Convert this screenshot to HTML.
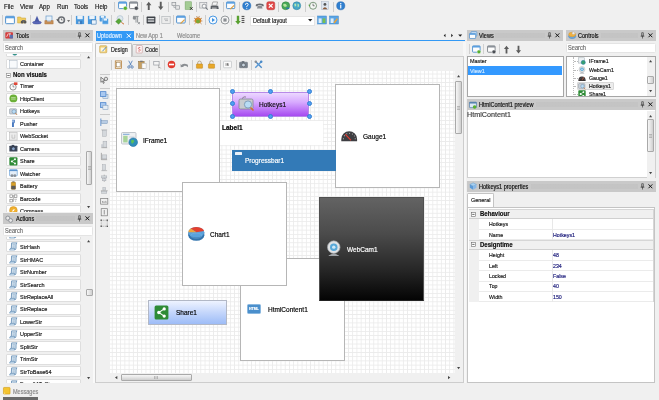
<!DOCTYPE html><html><head><meta charset="utf-8"><title>IDE</title><style>
*{margin:0;padding:0;box-sizing:border-box}
html,body{width:659px;height:400px;overflow:hidden;background:#f0f0f0;font-family:"Liberation Sans","DejaVu Sans",sans-serif;font-size:6px;color:#1a1a1a}
div,span,svg{position:absolute}
svg{overflow:visible}
.t{-webkit-text-stroke:0.18px currentColor;white-space:nowrap;line-height:8px;height:8px;transform:scaleX(.88);transform-origin:0 50%}
.sep{width:1px;height:10px;background:#cdcdcd}
.hdr{background:#c9c9c9;height:10.5px}
.dots{top:3px;height:5px;background-image:radial-gradient(circle,#b4b4b4 0.45px,transparent 0.6px);background-size:1.6px 1.6px}
.item{background:#fff;border:1px solid #dedede;border-radius:1px;height:10.8px;width:75.5px}
.white{background:#fff;border:1px solid #c4c4c4}
.sb{background:#f0f0f0}
.thumb{background:linear-gradient(to right,#f6f6f6,#e4e4e4 50%,#cfcfcf);border:1px solid #a9a9a9;border-radius:1px}
.thumbh{background:linear-gradient(to bottom,#f6f6f6,#e4e4e4 50%,#cfcfcf);border:1px solid #a9a9a9;border-radius:1px}
.panel{background:#fff;border:1px solid #b6b6b6}
.hnd{width:5px;height:5px;border-radius:50%;background:#4f9ff2;border:1px solid #3580d4}
</style></head><body><div id="app" style="left:0;top:0;width:659px;height:400px;will-change:transform">
<span class="t" style="left:4px;top:2.7px;font-size:6.9px;color:#1a1a1a">File</span>
<span class="t" style="left:19.5px;top:2.7px;font-size:6.9px;color:#1a1a1a">View</span>
<span class="t" style="left:39px;top:2.7px;font-size:6.9px;color:#1a1a1a">App</span>
<span class="t" style="left:56.5px;top:2.7px;font-size:6.9px;color:#1a1a1a">Run</span>
<span class="t" style="left:74px;top:2.7px;font-size:6.9px;color:#1a1a1a">Tools</span>
<span class="t" style="left:94.5px;top:2.7px;font-size:6.9px;color:#1a1a1a">Help</span>
<div class="sep" style="left:114px;top:1.5px"></div>
<div class="sep" style="left:141px;top:1.5px"></div>
<div class="sep" style="left:167.5px;top:1.5px"></div>
<div class="sep" style="left:195.5px;top:1.5px"></div>
<div class="sep" style="left:222.5px;top:1.5px"></div>
<div class="sep" style="left:239px;top:1.5px"></div>
<div class="sep" style="left:278px;top:1.5px"></div>
<div class="sep" style="left:305px;top:1.5px"></div>
<div class="sep" style="left:332.5px;top:1.5px"></div>
<svg style="left:117.5px;top:1.45px;" width="9.5" height="9.5" viewBox="0 0 10 10"><rect x="0.6" y="1" width="8.4" height="7" rx=".8" fill="#fdfdfd" stroke="#3f86c8" stroke-width=".9"/><rect x="0.6" y="1" width="8.4" height="1.8" fill="#5a9fe0"/><circle cx="7.7" cy="7.6" r="2.1" fill="#58b030" stroke="#fff" stroke-width=".4"/></svg>
<svg style="left:129px;top:1.45px;" width="9.5" height="9.5" viewBox="0 0 10 10"><rect x="0.6" y="1" width="8.4" height="7" rx=".8" fill="#fdfdfd" stroke="#70757c" stroke-width=".9"/><rect x="0.6" y="1" width="8.4" height="1.8" fill="#8a9098"/><circle cx="7.7" cy="7.6" r="2.1" fill="#4a4e54" stroke="#fff" stroke-width=".4"/></svg>
<svg style="left:144px;top:1.45px;" width="9.5" height="9.5" viewBox="0 0 10 10"><path d="M5 0.8 L7.8 4.4 H6 V9.4 H4 V4.4 H2.2 Z" fill="#5c5c5c"/></svg>
<svg style="left:155.5px;top:1.45px;" width="9.5" height="9.5" viewBox="0 0 10 10"><path d="M5 9.4 L7.8 5.8 H6 V0.8 H4 V5.8 H2.2 Z" fill="#5c5c5c"/></svg>
<svg style="left:171px;top:1.45px;" width="9.5" height="9.5" viewBox="0 0 10 10"><rect x="1" y="1.5" width="4" height="3.4" fill="#e8e8e8" stroke="#8a8f94" stroke-width=".7"/><rect x="5" y="5" width="4" height="3.6" fill="#e8e8e8" stroke="#8a8f94" stroke-width=".7"/><path d="M3 5 V6.8 H5" stroke="#8a8f94" stroke-width=".6" fill="none"/></svg>
<svg style="left:183.5px;top:1.45px;" width="9.5" height="9.5" viewBox="0 0 10 10"><rect x="1.2" y="0.8" width="6.6" height="8" fill="#a4cc94" stroke="#7aa86a" stroke-width=".6"/><path d="M6.4 6.6 L9 9.2 M9 6.6 L6.4 9.2" stroke="#222" stroke-width="1"/></svg>
<svg style="left:198.5px;top:1.45px;" width="9.5" height="9.5" viewBox="0 0 10 10"><rect x="0.8" y="1.4" width="7.4" height="6" fill="#ececec" stroke="#9a9ea4" stroke-width=".7"/><circle cx="5.4" cy="5.4" r="2.1" fill="#f8f8f8" stroke="#80858c" stroke-width=".8"/><path d="M7 7 L9.2 9.2" stroke="#70757c" stroke-width="1.1"/></svg>
<svg style="left:210px;top:1.45px;" width="9.5" height="9.5" viewBox="0 0 10 10"><path d="M3 1 H8 L7 4.6 H2 Z" fill="#f4f4f4" stroke="#777" stroke-width=".6"/><path d="M0.8 5 H8.6 L9.2 8.4 H0.6 Z" fill="#5a5e64"/><rect x="2" y="7" width="5" height="1" fill="#ddd"/></svg>
<svg style="left:225.5px;top:1.45px;" width="9.5" height="9.5" viewBox="0 0 10 10"><rect x="0.6" y="1" width="8.6" height="7" rx=".8" fill="#fdfdfd" stroke="#3f86c8" stroke-width=".9"/><rect x="0.6" y="1" width="8.6" height="1.8" fill="#5a9fe0"/><path d="M4.5 8.6 L8.6 4.6" stroke="#e0a040" stroke-width="1.3"/></svg>
<svg style="left:241.5px;top:1.45px;" width="9.5" height="9.5" viewBox="0 0 10 10"><circle cx="5" cy="5" r="4.3" fill="#2f7fd0" stroke="#1f5fa8" stroke-width=".5"/><path d="M3.6 4 Q3.6 2.4 5 2.4 Q6.5 2.4 6.5 3.8 Q6.5 4.7 5 5.4 V6.2" stroke="#fff" stroke-width="1" fill="none"/><circle cx="5" cy="7.6" r=".6" fill="#fff"/></svg>
<svg style="left:254.5px;top:1.45px;" width="9.5" height="9.5" viewBox="0 0 10 10"><path d="M0.8 4.6 Q0.8 2.6 5 2.6 Q9.2 2.6 9.2 4.6 V5.4 H7 V4.6 H3 V5.4 H0.8 Z" fill="#6a6e74"/><path d="M2 7.8 L3 5 H7 L8 7.8 Z" fill="#8a8e94"/></svg>
<svg style="left:266px;top:1.45px;" width="9.5" height="9.5" viewBox="0 0 10 10"><rect x="0.8" y="0.8" width="8.4" height="8.4" rx="1.8" fill="#e04848" stroke="#b82828" stroke-width=".5"/><path d="M3 3 L7 7 M7 3 L3 7" stroke="#fff" stroke-width="1.3"/></svg>
<svg style="left:280.5px;top:1.45px;" width="9.5" height="9.5" viewBox="0 0 10 10"><circle cx="5" cy="5" r="4.2" fill="#48a858" stroke="#2e7a3c" stroke-width=".5"/><path d="M2 4 Q4 2 5.5 3.6 Q7 5 5.5 6 Q4 6.5 3 5.5 Z" fill="#b8e4a0"/><path d="M5.5 7.6 H8.6" stroke="#2870c0" stroke-width="1.3"/></svg>
<svg style="left:292px;top:1.45px;" width="9.5" height="9.5" viewBox="0 0 10 10"><circle cx="5" cy="5" r="4.2" fill="#48a8c8" stroke="#2a7a9a" stroke-width=".5"/><path d="M2.4 3.4 Q3.6 2 4.4 3.6 T3 6 Z M5.8 3 Q7.4 2.6 7.4 4.6 T6 6.6 Z" fill="#b8e8b0"/></svg>
<svg style="left:307.5px;top:1.45px;" width="9.5" height="9.5" viewBox="0 0 10 10"><circle cx="5.3" cy="5" r="3.7" fill="#f4f6f4" stroke="#6a8a6a" stroke-width=".9"/><path d="M5.3 2.8 V5 H7" stroke="#444" stroke-width=".7" fill="none"/><path d="M0.4 4 L2.6 4 L1.5 6 Z" fill="#58a040"/></svg>
<svg style="left:320px;top:1.45px;" width="9.5" height="9.5" viewBox="0 0 10 10"><rect x="1.5" y="0.8" width="7.4" height="8.4" fill="#dfe6f0" stroke="#a8b4c4" stroke-width=".5"/><circle cx="5.2" cy="3.6" r="1.5" fill="#555"/><path d="M2.6 8.8 Q5.2 4.4 7.8 8.8 Z" fill="#8a5a3a"/></svg>
<svg style="left:336px;top:1.45px;" width="9.5" height="9.5" viewBox="0 0 10 10"><circle cx="5" cy="5" r="4.3" fill="#2f7fd0" stroke="#1f5fa8" stroke-width=".5"/><rect x="4.4" y="4.2" width="1.2" height="3.6" fill="#fff"/><circle cx="5" cy="2.8" r=".8" fill="#fff"/></svg>
<div class="sep" style="left:2px;top:15px"></div>
<div class="sep" style="left:29.5px;top:15px"></div>
<div class="sep" style="left:71px;top:15px"></div>
<div class="sep" style="left:111px;top:15px"></div>
<div class="sep" style="left:127.5px;top:15px"></div>
<div class="sep" style="left:143px;top:15px"></div>
<div class="sep" style="left:159px;top:15px"></div>
<div class="sep" style="left:172.5px;top:15px"></div>
<div class="sep" style="left:189px;top:15px"></div>
<div class="sep" style="left:205px;top:15px"></div>
<div class="sep" style="left:231px;top:15px"></div>
<svg style="left:5px;top:14.8px;" width="10" height="10" viewBox="0 0 10 10"><rect x="0.6" y="1.3" width="8.8" height="7.4" rx=".8" fill="#fdfdfd" stroke="#3f86c8" stroke-width=".9"/><rect x="0.6" y="1.3" width="8.8" height="2" fill="#5a9fe0"/></svg>
<svg style="left:17px;top:14.8px;" width="10" height="10" viewBox="0 0 10 10"><path d="M0.6 2 H3.6 L4.4 3 H8.6 V8 H0.6 Z" fill="#f0cc60" stroke="#c8a030" stroke-width=".5"/><circle cx="5.2" cy="7" r="1.5" fill="#555"/><circle cx="8" cy="7" r="1.5" fill="#555"/><rect x="5" y="5" width="3.2" height="1.6" fill="#666"/></svg>
<svg style="left:32px;top:14.8px;" width="10" height="10" viewBox="0 0 10 10"><path d="M5 0.8 L7.6 7 H2.4 Z" fill="#4a5aa8"/><ellipse cx="5" cy="7.6" rx="4.4" ry="1.5" fill="#5a68b8" stroke="#3a4890" stroke-width=".4"/></svg>
<svg style="left:44px;top:14.8px;" width="10" height="10" viewBox="0 0 10 10"><rect x="2" y="1" width="6" height="5" fill="#e8f2fa" stroke="#6a9ac8" stroke-width=".7"/><path d="M0.8 5.6 H3 V6.8 H7 V5.6 H9.2 V9 H0.8 Z" fill="#c89058" stroke="#a87038" stroke-width=".4"/></svg>
<svg style="left:56px;top:14.8px;" width="10" height="10" viewBox="0 0 10 10"><circle cx="5.4" cy="5" r="3.8" fill="#6a6e74"/><circle cx="5.4" cy="5" r="2.2" fill="#f4f4f4"/><path d="M5.4 3.4 V5 H6.6" stroke="#333" stroke-width=".6" fill="none"/><path d="M0.2 4.2 H2.8 L1.5 6.2 Z" fill="#555"/></svg>
<svg style="left:75px;top:14.8px;" width="10" height="10" viewBox="0 0 10 10"><path d="M0.9 0.9 H9.1 V9.1 H0.9 Z" fill="#4a9ade"/><rect x="2.3" y="0.9" width="5.4" height="3.3" fill="#eaf3fb"/><rect x="2.8" y="5.8" width="4.4" height="3.3" fill="#3a7cc0"/><rect x="3.4" y="6.4" width="1.3" height="2.2" fill="#eaf3fb"/></svg>
<svg style="left:86.5px;top:14.8px;" width="10" height="10" viewBox="0 0 10 10"><path d="M0.9 0.9 H9.1 V9.1 H0.9 Z" fill="#4a9ade"/><rect x="2.3" y="0.9" width="5.4" height="3.3" fill="#eaf3fb"/><rect x="4.6" y="5" width="4.5" height="4.1" fill="#eaf3fb" stroke="#2a6aa8" stroke-width=".5"/></svg>
<svg style="left:99px;top:14.8px;" width="10" height="10" viewBox="0 0 10 10"><rect x="0.6" y="0.8" width="6" height="5.6" rx=".6" fill="#4a9ade"/><rect x="1.8" y="0.8" width="3.4" height="2" fill="#eaf3fb"/><rect x="3.2" y="3.4" width="6.2" height="5.8" rx=".6" fill="#4a9be0" stroke="#eaf3fb" stroke-width=".5"/><rect x="4.6" y="3.6" width="3.4" height="2" fill="#eaf3fb"/></svg>
<svg style="left:115px;top:14.8px;" width="10" height="10" viewBox="0 0 10 10"><circle cx="5" cy="3.6" r="3" fill="#dfe8ee" stroke="#9ab0c0" stroke-width=".5"/><path d="M0.6 6.6 L4 3.6 L6.6 6 L3.6 9.2 Z" fill="#58a838" stroke="#3a7a24" stroke-width=".4"/><path d="M6.4 7.4 L9 9.2" stroke="#c87030" stroke-width="1"/></svg>
<svg style="left:130.5px;top:14.8px;" width="10" height="10" viewBox="0 0 10 10"><path d="M2 1.4 H7.6 M5 1.4 V7.6 M6.6 1.4 V7.6" stroke="#8a8e92" stroke-width=".9" fill="none"/><circle cx="3.4" cy="3" r="1.7" fill="#8a8e92"/><path d="M6.8 7 L9 9.2 M9 7 L6.8 9.2" stroke="#8a8e92" stroke-width=".8"/></svg>
<svg style="left:146px;top:14.8px;" width="10" height="10" viewBox="0 0 10 10"><rect x="0.6" y="1.6" width="8.8" height="6.8" rx=".6" fill="#3c4046"/><rect x="1.8" y="3" width="6.4" height="1.4" fill="#d8dadc"/><rect x="1.8" y="5.4" width="6.4" height="1.4" fill="#d8dadc"/></svg>
<svg style="left:161px;top:14.8px;" width="10" height="10" viewBox="0 0 10 10"><rect x="0.8" y="1.4" width="8.4" height="7.2" fill="#ececec" stroke="#b4b8bc" stroke-width=".7"/><path d="M3 4 H7 M4 5.6 H7" stroke="#a0a4a8" stroke-width=".7"/></svg>
<svg style="left:176px;top:14.8px;" width="10" height="10" viewBox="0 0 10 10"><rect x="0.6" y="1" width="8.6" height="7" rx=".8" fill="#fdfdfd" stroke="#3f86c8" stroke-width=".9"/><rect x="0.6" y="1" width="8.6" height="1.8" fill="#5a9fe0"/><path d="M4.5 8.6 L8.6 4.6" stroke="#e0a040" stroke-width="1.3"/></svg>
<svg style="left:193px;top:14.8px;" width="10" height="10" viewBox="0 0 10 10"><ellipse cx="5" cy="5.6" rx="3.2" ry="3" fill="#d88a28"/><ellipse cx="5" cy="6.4" rx="2" ry="1.8" fill="#78a838"/><path d="M1 3 L3 4.4 M9 3 L7 4.4 M0.6 6 H2 M8 6 H9.4 M1.4 9 L2.8 7.8 M8.6 9 L7.2 7.8 M3.6 1 L4.4 2.8 M6.4 1 L5.6 2.8" stroke="#a85a18" stroke-width=".6"/></svg>
<svg style="left:208px;top:14.8px;" width="10" height="10" viewBox="0 0 10 10"><circle cx="5" cy="5" r="4" fill="#f4f9fe" stroke="#3a8fe0" stroke-width=".9"/><path d="M4 3 L7 5 L4 7 Z" fill="#3a8fe0"/></svg>
<svg style="left:220px;top:14.8px;" width="10" height="10" viewBox="0 0 10 10"><circle cx="5" cy="5" r="4" fill="#f6f6f6" stroke="#8a8e92" stroke-width=".9"/><rect x="3.4" y="3.4" width="3.2" height="3.2" fill="#8a8e92"/></svg>
<svg style="left:235px;top:14.8px;" width="10" height="10" viewBox="0 0 10 10"><path d="M3 9.4 L5.8 6 H4.2 V0.8 H1.8 V6 H0.2 Z" fill="#58a030"/><path d="M6.6 1.4 H9.4 M6.6 3.4 H9.4 M6.6 5.4 H9.4 M6.6 7.4 H9.4" stroke="#444" stroke-width="1"/></svg>
<svg style="left:317px;top:14.8px;" width="10" height="10" viewBox="0 0 10 10"><rect x="0.6" y="1" width="8.8" height="8" fill="#5aa4e4" stroke="#3a84c8" stroke-width=".5"/><rect x="1.6" y="3.4" width="3" height="4.6" fill="#dcecf8"/><rect x="5.6" y="3.4" width="2.8" height="4.6" fill="#78c050"/></svg>
<svg style="left:329px;top:14.8px;" width="10" height="10" viewBox="0 0 10 10"><rect x="0.6" y="1" width="8.8" height="8" fill="#5aa4e4" stroke="#3a84c8" stroke-width=".5"/><rect x="1.6" y="3.4" width="3" height="4.6" fill="#dcecf8"/><path d="M5 8 L8.4 3.6" stroke="#f0a030" stroke-width="1.4"/></svg>
<svg style="left:66.9px;top:19.85px" width="3.2" height="2.3" viewBox="0 0 4 3"><path d="M0 0 L2 3 L4 0 Z" fill="#777"/></svg>
<div class="" style="left:250px;top:15.5px;width:65px;height:10px;background:#fff;border:1px solid #e4e4e4"></div>
<span class="t" style="left:253px;top:16.5px;font-size:6.3px;color:#222">Default layout</span>
<svg style="left:308px;top:19.3px" width="4.4" height="2.6" viewBox="0 0 5 3"><path d="M0 0 H5 L2.5 3 Z" fill="#222"/></svg>
<div class="hdr" style="left:3px;top:30.1px;width:90px;height:10.5px;"></div>
<svg style="left:5.3px;top:31.25px;" width="8.3" height="8.3" viewBox="0 0 10 10"><rect x="0.4" y="1.4" width="9.2" height="7.6" rx="1" fill="#d43c3c"/><path d="M2 7 L4 3 M4.6 3.4 H7 M5.8 3.4 V7" stroke="#fff" stroke-width=".9"/><rect x="5.6" y="4.6" width="4" height="4.4" fill="#3a78c8" opacity=".8"/></svg>
<span class="t" style="left:16px;top:31.6px;font-size:6.3px;color:#111">Tools</span>
<div class="dots" style="left:30.5px;top:33.1px;width:45.0px"></div>
<svg style="left:77.3px;top:32.1px" width="5" height="7" viewBox="1 0 5 7"><path d="M2.5 0.5 H4.5 V3.7 H5.3 V4.4 H3.8 V6.6 H3.2 V4.4 H1.7 V3.7 H2.5 Z" fill="#2a2a2a"/><rect x="3" y="1" width=".8" height="2.6" fill="#bbb"/></svg>
<svg style="left:85px;top:32.9px" width="4.8" height="4.6" viewBox="0 0 5 5"><path d="M0.4 0.4 L4.6 4.6 M4.6 0.4 L0.4 4.6" stroke="#111" stroke-width="1.05" fill="none"/></svg>
<div class="" style="left:3px;top:42.4px;width:90.2px;height:10.6px;background:#fff;border:1px solid #e4e4e4;border-radius:1.5px"></div>
<span class="t" style="left:4.5px;top:43.699999999999996px;color:#6e6e6e;font-size:6.4px">Search</span>
<div style="left:3px;top:54.1px;width:82px;height:158.4px;overflow:hidden">
<div class="item" style="left:2.6px;top:-8.000000000000002px"></div>
<svg style="left:5.800000000000001px;top:-7.000000000000002px;" width="8.8" height="8.8" viewBox="0 0 10 10"><rect x="0.6" y="1" width="7.6" height="6.6" fill="#eef2f4" stroke="#9aa4ac" stroke-width=".6"/><circle cx="6.6" cy="6.8" r="2.6" fill="#38a070" stroke="#2a78b0" stroke-width=".6"/></svg>
<span class="t" style="left:16.8px;top:-6.400000000000001px;font-size:6.25px">IFrame</span>
<div class="item" style="left:2.6px;top:4.499999999999998px"></div>
<svg style="left:5.800000000000001px;top:5.499999999999998px;" width="8.8" height="8.8" viewBox="0 0 10 10"><rect x="0.8" y="0.8" width="8.4" height="8.4" fill="#f8fafc" stroke="#a8b4c0" stroke-width=".6"/></svg>
<span class="t" style="left:16.8px;top:6.099999999999999px;font-size:6.25px">Container</span>
<svg style="left:3.2px;top:18.8px" width="5" height="5" viewBox="0 0 5 5"><rect x="0.5" y="0.5" width="4" height="4" fill="#fff" stroke="#888" stroke-width=".6"/><path d="M1.3 2.5 H3.7" stroke="#333" stroke-width=".7"/></svg>
<span class="t" style="left:10px;top:17.1px;font-weight:bold;font-size:6.3px;color:#111;transform:scaleX(.96)">Non visuals</span>
<div class="item" style="left:2.6px;top:26.799999999999997px"></div>
<svg style="left:5.800000000000001px;top:27.799999999999997px;" width="8.8" height="8.8" viewBox="0 0 10 10"><circle cx="4.6" cy="5.6" r="3.6" fill="#fafafa" stroke="#666" stroke-width=".8"/><path d="M4.6 3.6 V5.6 H6.2" stroke="#444" stroke-width=".6" fill="none"/><rect x="5.6" y="0.4" width="4" height="3" fill="#e04838"/></svg>
<span class="t" style="left:16.8px;top:28.399999999999995px;font-size:6.25px">Timer</span>
<div class="item" style="left:2.6px;top:39.25px"></div>
<svg style="left:5.800000000000001px;top:40.25px;" width="8.8" height="8.8" viewBox="0 0 10 10"><circle cx="5" cy="5" r="4.5" fill="#6cb038"/><path d="M2.4 4.2 H7.6 M2.4 5.8 H7.6" stroke="#e8f8d8" stroke-width=".7"/></svg>
<span class="t" style="left:16.8px;top:40.85px;font-size:6.25px">HttpClient</span>
<div class="item" style="left:2.6px;top:51.69999999999999px"></div>
<svg style="left:5.800000000000001px;top:52.69999999999999px;" width="8.8" height="8.8" viewBox="0 0 10 10"><rect x="0.6" y="2" width="8" height="6" rx=".8" fill="#c8d0d8" stroke="#8a949e" stroke-width=".6"/><circle cx="5.6" cy="5.2" r="2.2" fill="#b8dcf4" stroke="#6a8aac" stroke-width=".6"/><path d="M7.2 7 L9.2 9" stroke="#c87838" stroke-width="1"/></svg>
<span class="t" style="left:16.8px;top:53.29999999999999px;font-size:6.25px">Hotkeys</span>
<div class="item" style="left:2.6px;top:64.14999999999998px"></div>
<svg style="left:5.800000000000001px;top:65.14999999999998px;" width="8.8" height="8.8" viewBox="0 0 10 10"><path d="M3.4 0.8 H6.6 V4 L5.6 5 V9.2 H3.4 Z" fill="#4a7ac0"/><rect x="3.8" y="1.4" width="1.4" height="2.4" fill="#c8dcf4"/></svg>
<span class="t" style="left:16.8px;top:65.74999999999999px;font-size:6.25px">Pusher</span>
<div class="item" style="left:2.6px;top:76.6px"></div>
<svg style="left:5.800000000000001px;top:77.6px;" width="8.8" height="8.8" viewBox="0 0 10 10"><rect x="0.8" y="0.8" width="8.4" height="8.4" fill="#ececec" stroke="#b0b0b0" stroke-width=".6"/><path d="M3.4 3 V7 H6.6 V3" stroke="#b0b0b0" stroke-width=".7" fill="none"/></svg>
<span class="t" style="left:16.8px;top:78.2px;font-size:6.25px">WebSocket</span>
<div class="item" style="left:2.6px;top:89.05000000000001px"></div>
<svg style="left:5.800000000000001px;top:90.05000000000001px;" width="8.8" height="8.8" viewBox="0 0 10 10"><rect x="0.4" y="2" width="9.2" height="6.6" rx=".6" fill="#3c4658"/><rect x="3" y="1" width="3" height="1.4" fill="#3c4658"/><circle cx="5" cy="5.4" r="2.1" fill="#8aa4c8" stroke="#1c2638" stroke-width=".6"/></svg>
<span class="t" style="left:16.8px;top:90.65000000000002px;font-size:6.25px">Camera</span>
<div class="item" style="left:2.6px;top:101.5px"></div>
<svg style="left:5.800000000000001px;top:102.5px;" width="8.8" height="8.8" viewBox="0 0 10 10"><rect x="0.4" y="0.4" width="9.2" height="9.2" rx="1" fill="#2e8b36"/><path d="M6.8 2.6 L3.2 5 L6.8 7.4" stroke="#fff" stroke-width=".7" fill="none"/><circle cx="6.8" cy="2.6" r="1.1" fill="#fff"/><circle cx="3.2" cy="5" r="1.1" fill="#fff"/><circle cx="6.8" cy="7.4" r="1.1" fill="#fff"/></svg>
<span class="t" style="left:16.8px;top:103.10000000000001px;font-size:6.25px">Share</span>
<div class="item" style="left:2.6px;top:113.94999999999999px"></div>
<svg style="left:5.800000000000001px;top:114.94999999999999px;" width="8.8" height="8.8" viewBox="0 0 10 10"><rect x="0.6" y="0.8" width="8.8" height="7" rx=".6" fill="#e4eef8" stroke="#5a94d0" stroke-width=".7"/><rect x="0.6" y="0.8" width="8.8" height="1.6" fill="#5a94d0"/><circle cx="3.4" cy="7.6" r="1.6" fill="#8a9098"/><circle cx="6.6" cy="7.6" r="1.6" fill="#8a9098"/></svg>
<span class="t" style="left:16.8px;top:115.55px;font-size:6.25px">Watcher</span>
<div class="item" style="left:2.6px;top:126.39999999999998px"></div>
<svg style="left:5.800000000000001px;top:127.39999999999998px;" width="8.8" height="8.8" viewBox="0 0 10 10"><rect x="2.6" y="1.2" width="4.8" height="8.2" rx=".8" fill="#d8a028" stroke="#9a6a10" stroke-width=".5"/><rect x="3.8" y="0.4" width="2.4" height="1.2" fill="#777"/><rect x="2.6" y="5.4" width="4.8" height="4" fill="#5a5a5a"/></svg>
<span class="t" style="left:16.8px;top:127.99999999999999px;font-size:6.25px">Battery</span>
<div class="item" style="left:2.6px;top:138.85px"></div>
<svg style="left:5.800000000000001px;top:139.85px;" width="8.8" height="8.8" viewBox="0 0 10 10"><rect x="1" y="1" width="3" height="3" fill="none" stroke="#888" stroke-width=".8"/><rect x="6" y="1" width="3" height="3" fill="none" stroke="#888" stroke-width=".8"/><rect x="1" y="6" width="3" height="3" fill="none" stroke="#888" stroke-width=".8"/><path d="M5 1 V9 M6 6 H9 M7.6 7.4 V9" stroke="#999" stroke-width=".8"/></svg>
<span class="t" style="left:16.8px;top:140.45px;font-size:6.25px">Barcode</span>
<div class="item" style="left:2.6px;top:151.3px"></div>
<svg style="left:5.800000000000001px;top:152.3px;" width="8.8" height="8.8" viewBox="0 0 10 10"><circle cx="5" cy="5" r="4.4" fill="#f0b030" stroke="#c88818" stroke-width=".5"/><path d="M3.4 6.6 L4.4 4.4 L6.6 3.4 L5.6 5.6 Z" fill="#fff"/></svg>
<span class="t" style="left:16.8px;top:152.9px;font-size:6.25px">Compass</span>
</div>
<div class="sb" style="left:85px;top:54px;width:8px;height:158px;"></div>
<svg style="left:87.4px;top:56.35px" width="3.2" height="2.3" viewBox="0 0 4 3"><path d="M0 3 L2 0 L4 3 Z" fill="#444"/></svg>
<svg style="left:87.4px;top:206.35px" width="3.2" height="2.3" viewBox="0 0 4 3"><path d="M0 0 L2 3 L4 0 Z" fill="#444"/></svg>
<div class="thumb" style="left:85.8px;top:151.3px;width:6.7px;height:33.7px;"></div>
<svg style="left:87.7px;top:166px" width="3" height="4" viewBox="0 0 3 4"><path d="M0 .5 H3 M0 2 H3 M0 3.5 H3" stroke="#888" stroke-width=".5"/></svg>
<div class="hdr" style="left:3px;top:213.4px;width:90px;height:10.5px;"></div>
<svg style="left:5.3px;top:214.55px;" width="8.3" height="8.3" viewBox="0 0 10 10"><circle cx="3.4" cy="3.8" r="2.5" fill="#e8e8e8" stroke="#80858c" stroke-width="1"/><circle cx="6.8" cy="6.6" r="2.3" fill="#e8e8e8" stroke="#80858c" stroke-width="1"/></svg>
<span class="t" style="left:16.1px;top:214.9px;font-size:6.3px;color:#111">Actions</span>
<div class="dots" style="left:35.7px;top:216.4px;width:39.8px"></div>
<svg style="left:77.3px;top:215.4px" width="5" height="7" viewBox="1 0 5 7"><path d="M2.5 0.5 H4.5 V3.7 H5.3 V4.4 H3.8 V6.6 H3.2 V4.4 H1.7 V3.7 H2.5 Z" fill="#2a2a2a"/><rect x="3" y="1" width=".8" height="2.6" fill="#bbb"/></svg>
<svg style="left:85.1px;top:216.20000000000002px" width="4.8" height="4.6" viewBox="0 0 5 5"><path d="M0.4 0.4 L4.6 4.6 M4.6 0.4 L0.4 4.6" stroke="#111" stroke-width="1.05" fill="none"/></svg>
<div class="" style="left:3px;top:225.9px;width:90.2px;height:10.6px;background:#fff;border:1px solid #e4e4e4;border-radius:1.5px"></div>
<span class="t" style="left:4.5px;top:227.20000000000002px;color:#6e6e6e;font-size:6.4px">Search</span>
<div style="left:3px;top:237.2px;width:82px;height:146.3px;overflow:hidden">
<div class="item" style="left:2.6px;top:-8.180000000000001px"></div>
<svg style="left:5.800000000000001px;top:-7.1800000000000015px;" width="8.8" height="8.8" viewBox="0 0 10 10"><path d="M3 1 H9.2 Q8 1.8 8 3.4 V7 Q8 9 6 9 H0.8 Q2.4 8.6 2.6 7 Z" fill="#dce8f2" stroke="#4a7aa8" stroke-width=".8"/><path d="M0.8 9 Q0.8 7.2 2.6 7.2 H6.4 Q6.6 8.6 5.8 9" fill="#b8d0e4" stroke="#4a7aa8" stroke-width=".6"/><path d="M4 3 H6.8 M4 4.6 H6.8 M4 6 H6.4" stroke="#6a94bc" stroke-width=".5"/></svg>
<span class="t" style="left:16.8px;top:-6.580000000000001px;font-size:6.25px">StrLen</span>
<div class="item" style="left:2.6px;top:4.299999999999988px"></div>
<svg style="left:5.800000000000001px;top:5.299999999999988px;" width="8.8" height="8.8" viewBox="0 0 10 10"><path d="M3 1 H9.2 Q8 1.8 8 3.4 V7 Q8 9 6 9 H0.8 Q2.4 8.6 2.6 7 Z" fill="#dce8f2" stroke="#4a7aa8" stroke-width=".8"/><path d="M0.8 9 Q0.8 7.2 2.6 7.2 H6.4 Q6.6 8.6 5.8 9" fill="#b8d0e4" stroke="#4a7aa8" stroke-width=".6"/><path d="M4 3 H6.8 M4 4.6 H6.8 M4 6 H6.4" stroke="#6a94bc" stroke-width=".5"/></svg>
<span class="t" style="left:16.8px;top:5.899999999999989px;font-size:6.25px">StrHash</span>
<div class="item" style="left:2.6px;top:16.78000000000001px"></div>
<svg style="left:5.800000000000001px;top:17.78000000000001px;" width="8.8" height="8.8" viewBox="0 0 10 10"><path d="M3 1 H9.2 Q8 1.8 8 3.4 V7 Q8 9 6 9 H0.8 Q2.4 8.6 2.6 7 Z" fill="#dce8f2" stroke="#4a7aa8" stroke-width=".8"/><path d="M0.8 9 Q0.8 7.2 2.6 7.2 H6.4 Q6.6 8.6 5.8 9" fill="#b8d0e4" stroke="#4a7aa8" stroke-width=".6"/><path d="M4 3 H6.8 M4 4.6 H6.8 M4 6 H6.4" stroke="#6a94bc" stroke-width=".5"/></svg>
<span class="t" style="left:16.8px;top:18.380000000000006px;font-size:6.25px">StrHMAC</span>
<div class="item" style="left:2.6px;top:29.260000000000026px"></div>
<svg style="left:5.800000000000001px;top:30.260000000000026px;" width="8.8" height="8.8" viewBox="0 0 10 10"><path d="M3 1 H9.2 Q8 1.8 8 3.4 V7 Q8 9 6 9 H0.8 Q2.4 8.6 2.6 7 Z" fill="#dce8f2" stroke="#4a7aa8" stroke-width=".8"/><path d="M0.8 9 Q0.8 7.2 2.6 7.2 H6.4 Q6.6 8.6 5.8 9" fill="#b8d0e4" stroke="#4a7aa8" stroke-width=".6"/><path d="M4 3 H6.8 M4 4.6 H6.8 M4 6 H6.4" stroke="#6a94bc" stroke-width=".5"/></svg>
<span class="t" style="left:16.8px;top:30.860000000000024px;font-size:6.25px">StrNumber</span>
<div class="item" style="left:2.6px;top:41.73999999999999px"></div>
<svg style="left:5.800000000000001px;top:42.73999999999999px;" width="8.8" height="8.8" viewBox="0 0 10 10"><path d="M3 1 H9.2 Q8 1.8 8 3.4 V7 Q8 9 6 9 H0.8 Q2.4 8.6 2.6 7 Z" fill="#dce8f2" stroke="#4a7aa8" stroke-width=".8"/><path d="M0.8 9 Q0.8 7.2 2.6 7.2 H6.4 Q6.6 8.6 5.8 9" fill="#b8d0e4" stroke="#4a7aa8" stroke-width=".6"/><path d="M4 3 H6.8 M4 4.6 H6.8 M4 6 H6.4" stroke="#6a94bc" stroke-width=".5"/></svg>
<span class="t" style="left:16.8px;top:43.33999999999999px;font-size:6.25px">StrSearch</span>
<div class="item" style="left:2.6px;top:54.220000000000006px"></div>
<svg style="left:5.800000000000001px;top:55.220000000000006px;" width="8.8" height="8.8" viewBox="0 0 10 10"><path d="M3 1 H9.2 Q8 1.8 8 3.4 V7 Q8 9 6 9 H0.8 Q2.4 8.6 2.6 7 Z" fill="#dce8f2" stroke="#4a7aa8" stroke-width=".8"/><path d="M0.8 9 Q0.8 7.2 2.6 7.2 H6.4 Q6.6 8.6 5.8 9" fill="#b8d0e4" stroke="#4a7aa8" stroke-width=".6"/><path d="M4 3 H6.8 M4 4.6 H6.8 M4 6 H6.4" stroke="#6a94bc" stroke-width=".5"/></svg>
<span class="t" style="left:16.8px;top:55.82000000000001px;font-size:6.25px">StrReplaceAll</span>
<div class="item" style="left:2.6px;top:66.69999999999996px"></div>
<svg style="left:5.800000000000001px;top:67.69999999999996px;" width="8.8" height="8.8" viewBox="0 0 10 10"><path d="M3 1 H9.2 Q8 1.8 8 3.4 V7 Q8 9 6 9 H0.8 Q2.4 8.6 2.6 7 Z" fill="#dce8f2" stroke="#4a7aa8" stroke-width=".8"/><path d="M0.8 9 Q0.8 7.2 2.6 7.2 H6.4 Q6.6 8.6 5.8 9" fill="#b8d0e4" stroke="#4a7aa8" stroke-width=".6"/><path d="M4 3 H6.8 M4 4.6 H6.8 M4 6 H6.4" stroke="#6a94bc" stroke-width=".5"/></svg>
<span class="t" style="left:16.8px;top:68.29999999999997px;font-size:6.25px">StrReplace</span>
<div class="item" style="left:2.6px;top:79.17999999999998px"></div>
<svg style="left:5.800000000000001px;top:80.17999999999998px;" width="8.8" height="8.8" viewBox="0 0 10 10"><path d="M3 1 H9.2 Q8 1.8 8 3.4 V7 Q8 9 6 9 H0.8 Q2.4 8.6 2.6 7 Z" fill="#dce8f2" stroke="#4a7aa8" stroke-width=".8"/><path d="M0.8 9 Q0.8 7.2 2.6 7.2 H6.4 Q6.6 8.6 5.8 9" fill="#b8d0e4" stroke="#4a7aa8" stroke-width=".6"/><path d="M4 3 H6.8 M4 4.6 H6.8 M4 6 H6.4" stroke="#6a94bc" stroke-width=".5"/></svg>
<span class="t" style="left:16.8px;top:80.77999999999999px;font-size:6.25px">LowerStr</span>
<div class="item" style="left:2.6px;top:91.66px"></div>
<svg style="left:5.800000000000001px;top:92.66px;" width="8.8" height="8.8" viewBox="0 0 10 10"><path d="M3 1 H9.2 Q8 1.8 8 3.4 V7 Q8 9 6 9 H0.8 Q2.4 8.6 2.6 7 Z" fill="#dce8f2" stroke="#4a7aa8" stroke-width=".8"/><path d="M0.8 9 Q0.8 7.2 2.6 7.2 H6.4 Q6.6 8.6 5.8 9" fill="#b8d0e4" stroke="#4a7aa8" stroke-width=".6"/><path d="M4 3 H6.8 M4 4.6 H6.8 M4 6 H6.4" stroke="#6a94bc" stroke-width=".5"/></svg>
<span class="t" style="left:16.8px;top:93.26px;font-size:6.25px">UpperStr</span>
<div class="item" style="left:2.6px;top:104.14000000000001px"></div>
<svg style="left:5.800000000000001px;top:105.14000000000001px;" width="8.8" height="8.8" viewBox="0 0 10 10"><path d="M3 1 H9.2 Q8 1.8 8 3.4 V7 Q8 9 6 9 H0.8 Q2.4 8.6 2.6 7 Z" fill="#dce8f2" stroke="#4a7aa8" stroke-width=".8"/><path d="M0.8 9 Q0.8 7.2 2.6 7.2 H6.4 Q6.6 8.6 5.8 9" fill="#b8d0e4" stroke="#4a7aa8" stroke-width=".6"/><path d="M4 3 H6.8 M4 4.6 H6.8 M4 6 H6.4" stroke="#6a94bc" stroke-width=".5"/></svg>
<span class="t" style="left:16.8px;top:105.74000000000002px;font-size:6.25px">SplitStr</span>
<div class="item" style="left:2.6px;top:116.62000000000003px"></div>
<svg style="left:5.800000000000001px;top:117.62000000000003px;" width="8.8" height="8.8" viewBox="0 0 10 10"><path d="M3 1 H9.2 Q8 1.8 8 3.4 V7 Q8 9 6 9 H0.8 Q2.4 8.6 2.6 7 Z" fill="#dce8f2" stroke="#4a7aa8" stroke-width=".8"/><path d="M0.8 9 Q0.8 7.2 2.6 7.2 H6.4 Q6.6 8.6 5.8 9" fill="#b8d0e4" stroke="#4a7aa8" stroke-width=".6"/><path d="M4 3 H6.8 M4 4.6 H6.8 M4 6 H6.4" stroke="#6a94bc" stroke-width=".5"/></svg>
<span class="t" style="left:16.8px;top:118.22000000000004px;font-size:6.25px">TrimStr</span>
<div class="item" style="left:2.6px;top:129.1px"></div>
<svg style="left:5.800000000000001px;top:130.1px;" width="8.8" height="8.8" viewBox="0 0 10 10"><path d="M3 1 H9.2 Q8 1.8 8 3.4 V7 Q8 9 6 9 H0.8 Q2.4 8.6 2.6 7 Z" fill="#dce8f2" stroke="#4a7aa8" stroke-width=".8"/><path d="M0.8 9 Q0.8 7.2 2.6 7.2 H6.4 Q6.6 8.6 5.8 9" fill="#b8d0e4" stroke="#4a7aa8" stroke-width=".6"/><path d="M4 3 H6.8 M4 4.6 H6.8 M4 6 H6.4" stroke="#6a94bc" stroke-width=".5"/></svg>
<span class="t" style="left:16.8px;top:130.7px;font-size:6.25px">StrToBase64</span>
<div class="item" style="left:2.6px;top:141.57999999999996px"></div>
<svg style="left:5.800000000000001px;top:142.57999999999996px;" width="8.8" height="8.8" viewBox="0 0 10 10"><path d="M3 1 H9.2 Q8 1.8 8 3.4 V7 Q8 9 6 9 H0.8 Q2.4 8.6 2.6 7 Z" fill="#dce8f2" stroke="#4a7aa8" stroke-width=".8"/><path d="M0.8 9 Q0.8 7.2 2.6 7.2 H6.4 Q6.6 8.6 5.8 9" fill="#b8d0e4" stroke="#4a7aa8" stroke-width=".6"/><path d="M4 3 H6.8 M4 4.6 H6.8 M4 6 H6.4" stroke="#6a94bc" stroke-width=".5"/></svg>
<span class="t" style="left:16.8px;top:143.17999999999995px;font-size:6.25px">Base64ToStr</span>
</div>
<div class="sb" style="left:85px;top:238px;width:8px;height:145px;"></div>
<svg style="left:87.4px;top:240.35px" width="3.2" height="2.3" viewBox="0 0 4 3"><path d="M0 3 L2 0 L4 3 Z" fill="#444"/></svg>
<svg style="left:87.4px;top:377.35px" width="3.2" height="2.3" viewBox="0 0 4 3"><path d="M0 0 L2 3 L4 0 Z" fill="#444"/></svg>
<div class="thumb" style="left:85.5px;top:289px;width:7px;height:7px;"></div>
<div class="" style="left:93.2px;top:42px;width:2px;height:341px;background:#f9f9f9"></div>
<div class="" style="left:463.2px;top:42px;width:3.2px;height:341px;background:#f7f7f7"></div>
<svg style="left:3px;top:387.25px;" width="7.5" height="7.5" viewBox="0 0 10 10"><rect x="0.6" y="0.6" width="8.8" height="8.8" rx=".8" fill="#f4c430" stroke="#d09a10" stroke-width=".8"/><path d="M1.4 7.4 L3.4 8.8 H1.4 Z" fill="#fff6c8"/></svg>
<span class="t" style="left:13px;top:387.5px;color:#8a8a8a;font-size:6.3px">Messages</span>
<div class="" style="left:3px;top:397px;width:35px;height:3px;background:#6a6a6a"></div>
<div class="" style="left:95.5px;top:30.5px;width:38.5px;height:10.5px;background:#3399f5"></div>
<span class="t" style="left:97px;top:32px;color:#e2f0ff;font-size:6.3px">Uptodown</span>
<svg style="left:126.3px;top:33px" width="5.6" height="5.6" viewBox="0 0 6 6"><path d="M0.8 0.8 L5.2 5.2 M5.2 0.8 L0.8 5.2" stroke="#fff" stroke-width="1"/></svg>
<span class="t" style="left:136px;top:32.1px;color:#8c8c8c;font-size:6.3px">New App 1</span>
<span class="t" style="left:176.5px;top:32.1px;color:#8c8c8c;font-size:6.3px">Welcome</span>
<div class="" style="left:95.5px;top:40px;width:369px;height:1.1px;background:#3399f5"></div>
<svg style="left:442.8px;top:32.8px" width="20" height="5" viewBox="0 0 20 5"><path d="M2.5 0.7 L0.7 2.5 L2.5 4.3 Z M8.2 0.7 L10 2.5 L8.2 4.3 Z M15.2 1.4 H19.2 L17.2 3.8 Z" fill="#222"/></svg>
<div class="" style="left:95.3px;top:55.5px;width:369.2px;height:327.8px;background:#f0f0f0;border:1px solid #cdcdcd"></div>
<div class="" style="left:95.4px;top:42.6px;width:36.4px;height:14px;background:#f8f8f8;border:1px solid #c4c4c4;border-bottom:none;border-radius:1.5px 1.5px 0 0"></div>
<svg style="left:99.3px;top:44.75px;" width="8.5" height="8.5" viewBox="0 0 10 10"><rect x="0.8" y="0.8" width="8.4" height="8.4" rx="1" fill="#f0d078" stroke="#c09838" stroke-width=".6"/><rect x="2" y="3" width="5" height="4.6" fill="#fff6dc"/><path d="M4 7.4 L8.6 2.4" stroke="#4a88c8" stroke-width="1.1"/></svg>
<span class="t" style="left:110.8px;top:45.5px;font-size:6.3px;transform:scaleX(.85)">Design</span>
<div class="" style="left:132.2px;top:44.3px;width:28.2px;height:11.7px;background:linear-gradient(to bottom,#f2f2f2,#e2e2e2);border:1px solid #c4c4c4;border-bottom:none;border-radius:1.5px 1.5px 0 0"></div>
<svg style="left:134.6px;top:45.25px;" width="8.5" height="8.5" viewBox="0 0 10 10"><rect x="1.4" y="0.6" width="7.2" height="8.8" rx=".8" fill="#fdf4f4" stroke="#c08888" stroke-width=".6"/><path d="M6.2 3 Q4 2.4 4 4 Q4 5 5.2 5 Q6.4 5.2 6.2 6.4 Q6 7.4 3.8 7" stroke="#c03030" stroke-width=".7" fill="none"/></svg>
<span class="t" style="left:144.7px;top:46.3px;font-size:6.3px;transform:scaleX(.86)">Code</span>
<div class="sep" style="left:111.3px;top:59.5px"></div>
<div class="sep" style="left:149.3px;top:59.5px"></div>
<div class="sep" style="left:164px;top:59.5px"></div>
<div class="sep" style="left:192px;top:59.5px"></div>
<div class="sep" style="left:219.5px;top:59.5px"></div>
<div class="sep" style="left:235.5px;top:59.5px"></div>
<div class="sep" style="left:250.5px;top:59.5px"></div>
<svg style="left:113.5px;top:60.2px;" width="9" height="9" viewBox="0 0 10 10"><rect x="1.4" y="1" width="7" height="8.2" fill="#f4ead8" stroke="#b07830" stroke-width=".8"/><rect x="3" y="3" width="3.8" height="4.6" fill="#fff" stroke="#8a6a3a" stroke-width=".5"/></svg>
<svg style="left:125.5px;top:60.2px;" width="9" height="9" viewBox="0 0 10 10"><path d="M3 0.8 L6 6.4 M7 0.8 L4 6.4" stroke="#4a7ab8" stroke-width=".9"/><circle cx="3.2" cy="7.8" r="1.3" fill="none" stroke="#3a6aa8" stroke-width=".8"/><circle cx="6.8" cy="7.8" r="1.3" fill="none" stroke="#3a6aa8" stroke-width=".8"/></svg>
<svg style="left:137.5px;top:60.2px;" width="9" height="9" viewBox="0 0 10 10"><rect x="0.8" y="1.6" width="6" height="7.6" fill="#c8a060" stroke="#8a6a3a" stroke-width=".6"/><rect x="2.4" y="0.8" width="2.8" height="1.6" fill="#777"/><rect x="4.4" y="3.6" width="4.6" height="5.6" fill="#fbfbfb" stroke="#aaa" stroke-width=".5"/></svg>
<svg style="left:152.5px;top:60.2px;" width="9" height="9" viewBox="0 0 10 10"><rect x="0.8" y="1.6" width="6" height="4" fill="#f4f4f4" stroke="#9a9ea4" stroke-width=".8"/><path d="M6.4 5.4 V9 L7.4 8 L8.6 9.4" stroke="#888" stroke-width=".7" fill="none"/></svg>
<svg style="left:167.3px;top:60.2px;" width="9" height="9" viewBox="0 0 10 10"><circle cx="5" cy="5" r="4.2" fill="#e23c30"/><rect x="2.2" y="4.1" width="5.6" height="1.8" fill="#fff"/></svg>
<svg style="left:180px;top:60.2px;" width="9" height="9" viewBox="0 0 10 10"><path d="M1 6.6 Q3.4 2.2 8.8 5.4 L8.8 8 Q5 5 3.4 7.6 Z" fill="#8a8e92"/><path d="M0.6 4.4 L0.8 8 L4.2 7.4 Z" fill="#8a8e92"/></svg>
<svg style="left:195px;top:60.2px;" width="9" height="9" viewBox="0 0 10 10"><path d="M3 4.6 V3.2 Q3 1.2 5 1.2 Q7 1.2 7 3.2 V4.6" stroke="#b0a080" stroke-width="1" fill="none"/><rect x="1.6" y="4.4" width="6.8" height="4.8" rx=".6" fill="#e8a828" stroke="#b87a10" stroke-width=".5"/></svg>
<svg style="left:206.5px;top:60.2px;" width="9" height="9" viewBox="0 0 10 10"><path d="M3 4.6 V2.8 Q3 0.8 5 0.8 Q7 0.8 7 2.8" stroke="#b0a080" stroke-width="1" fill="none"/><rect x="1.6" y="4.4" width="6.8" height="4.8" rx=".6" fill="#e8a828" stroke="#b87a10" stroke-width=".5"/></svg>
<svg style="left:223px;top:60.2px;" width="9" height="9" viewBox="0 0 10 10"><rect x="0.6" y="1.4" width="8.8" height="7.2" rx=".8" fill="#fafafa" stroke="#b8bcc0" stroke-width=".7"/><path d="M3.4 3.4 V6.6 M5.4 6.6 V3.4 L4.6 5.6 H6.6" stroke="#444" stroke-width=".6" fill="none"/></svg>
<svg style="left:238.7px;top:60.2px;" width="9" height="9" viewBox="0 0 10 10"><rect x="0.6" y="2.4" width="8.8" height="6.2" rx=".6" fill="#78828c" stroke="#545c66" stroke-width=".5"/><rect x="3" y="1.4" width="3" height="1.4" fill="#545c66"/><circle cx="5" cy="5.6" r="2" fill="#c8d4e0" stroke="#444" stroke-width=".5"/></svg>
<svg style="left:253.7px;top:60.2px;" width="9" height="9" viewBox="0 0 10 10"><path d="M1.4 1.4 L8.6 8.6" stroke="#4a8ac8" stroke-width="1.5"/><path d="M8.6 1.4 L1.4 8.6" stroke="#5a98d4" stroke-width="1.5"/><circle cx="2" cy="2" r="1.4" fill="#8a9098"/><circle cx="8" cy="2" r="1.4" fill="#4a8ac8"/></svg>
<svg style="left:100.3px;top:75.75px;" width="8.5" height="8.5" viewBox="0 0 10 10"><path d="M1 1.4 L1 7.4 L2.8 6 L4 8.8 L5 8.2 L3.8 5.6 L6 5.4 Z" fill="#e8e8e8" stroke="#555" stroke-width=".8"/><circle cx="7" cy="3.4" r="2" fill="#e0e0e0" stroke="#666" stroke-width=".9"/></svg>
<svg style="left:100.3px;top:91.35px;" width="8.5" height="8.5" viewBox="0 0 10 10"><rect x="3.4" y="3.8" width="6" height="5.2" fill="#d8e4f0" stroke="#7a98b8" stroke-width=".6"/><rect x="0.6" y="0.8" width="6.4" height="5.6" fill="#a8c8f0" stroke="#3a78c8" stroke-width=".8"/></svg>
<svg style="left:100.3px;top:102.15px;" width="8.5" height="8.5" viewBox="0 0 10 10"><rect x="0.6" y="0.8" width="6.4" height="5.6" fill="#a8c8f0" stroke="#3a78c8" stroke-width=".8"/><rect x="3.4" y="3.8" width="6" height="5.2" fill="#e4ecf4" stroke="#7a98b8" stroke-width=".6"/></svg>
<svg style="left:100.3px;top:117.75px;" width="8.5" height="8.5" viewBox="0 0 10 10"><path d="M1 0.6 V9.4" stroke="#3a78c8" stroke-width=".9"/><rect x="1.6" y="3" width="7" height="3.6" fill="#b8cce4" stroke="#6a8ab0" stroke-width=".5"/></svg>
<svg style="left:100.3px;top:129.05px;" width="8.5" height="8.5" viewBox="0 0 10 10"><path d="M1.6 1 H8.4" stroke="#aaa" stroke-width=".8"/><rect x="3" y="1.6" width="4.4" height="7" fill="#d4d8dc" stroke="#a0a4aa" stroke-width=".5"/></svg>
<svg style="left:100.3px;top:140.35px;" width="8.5" height="8.5" viewBox="0 0 10 10"><path d="M1.6 9 H8.4" stroke="#888" stroke-width=".8"/><rect x="3.6" y="1.4" width="4.4" height="7" fill="#d4d8dc" stroke="#a0a4aa" stroke-width=".5"/><rect x="1.4" y="5" width="2.2" height="3.4" fill="#c8ccd2"/></svg>
<svg style="left:100.3px;top:151.65px;" width="8.5" height="8.5" viewBox="0 0 10 10"><path d="M1.6 9 H8.4 M1.6 1 V9" stroke="#888" stroke-width=".8"/><rect x="2.4" y="3.4" width="5.6" height="4.6" fill="#d4d8dc" stroke="#a0a4aa" stroke-width=".5"/></svg>
<svg style="left:100.3px;top:162.95px;" width="8.5" height="8.5" viewBox="0 0 10 10"><path d="M1.6 9 H8.4" stroke="#aaa" stroke-width=".8"/><rect x="3" y="2" width="3.6" height="6.4" fill="#d4d8dc" stroke="#a0a4aa" stroke-width=".5"/></svg>
<svg style="left:100.3px;top:174.25px;" width="8.5" height="8.5" viewBox="0 0 10 10"><path d="M5 0.8 V9.2" stroke="#888" stroke-width=".7"/><rect x="2" y="2.2" width="6" height="2.4" fill="#d4d8dc" stroke="#a0a4aa" stroke-width=".5"/><rect x="3" y="5.6" width="4" height="2.4" fill="#d4d8dc" stroke="#a0a4aa" stroke-width=".5"/></svg>
<svg style="left:100.3px;top:185.55px;" width="8.5" height="8.5" viewBox="0 0 10 10"><path d="M1 5.6 H9" stroke="#888" stroke-width=".7"/><rect x="3.4" y="1.8" width="3.2" height="3" fill="#d4d8dc" stroke="#a0a4aa" stroke-width=".5"/><rect x="2" y="6.2" width="6" height="2.4" fill="#d4d8dc" stroke="#a0a4aa" stroke-width=".5"/></svg>
<svg style="left:100.3px;top:196.85px;" width="8.5" height="8.5" viewBox="0 0 10 10"><rect x="0.8" y="1.6" width="8.4" height="6.8" fill="#f0f0f0" stroke="#777" stroke-width=".8"/><path d="M2.4 6 H7.6 M2.4 6 L3.6 5 M7.6 6 L6.4 5" stroke="#555" stroke-width=".6" fill="none"/></svg>
<svg style="left:100.3px;top:208.15px;" width="8.5" height="8.5" viewBox="0 0 10 10"><rect x="1.4" y="0.8" width="7.2" height="8.4" fill="#f0f0f0" stroke="#777" stroke-width=".8"/><path d="M5 2.4 V7.6" stroke="#555" stroke-width=".7"/></svg>
<svg style="left:100.3px;top:219.45px;" width="8.5" height="8.5" viewBox="0 0 10 10"><rect x="1.4" y="1.4" width="7.2" height="7.2" fill="#e8e8e8" stroke="#888" stroke-width=".7" stroke-dasharray="1.2 .8"/><rect x="0.6" y="0.6" width="1.6" height="1.6" fill="#555"/><rect x="7.8" y="0.6" width="1.6" height="1.6" fill="#555"/><rect x="0.6" y="7.8" width="1.6" height="1.6" fill="#555"/><rect x="7.8" y="7.8" width="1.6" height="1.6" fill="#555"/></svg>
<div class="" style="left:99.5px;top:74px;width:10px;height:1px;background:#cacaca"></div>
<div class="" style="left:99.5px;top:88px;width:10px;height:1px;background:#cacaca"></div>
<div class="" style="left:99.5px;top:113.5px;width:10px;height:1px;background:#cacaca"></div>
<div style="left:110px;top:71px;width:345px;height:301.5px;overflow:hidden;background-color:#fff;background-image:linear-gradient(to right,#ebebeb 0,#ebebeb 1px,transparent 1px),linear-gradient(to bottom,#ebebeb 0,#ebebeb 1px,transparent 1px);background-size:4.22px 4.22px;background-position:1.8px 2.6px">
<div class="panel" style="left:130px;top:187.3px;width:104.5px;height:103.2px;"></div>
<div style="left:137px;top:233px;width:14.2px;height:9.8px;background:#4a8fcc;border-radius:1.5px;border:1px solid #8ab8e0"></div>
<span class="t" style="left:138.6px;top:233.89999999999998px;font-size:4px;font-weight:bold;color:#fff">HTML</span>
<span class="t" style="left:158px;top:235.1px;font-size:7.4px;color:#000;">HtmlContent1</span>
<div class="panel" style="left:5.5px;top:17px;width:104px;height:103.8px;"></div>
<svg style="left:11.400000000000006px;top:61px" width="17" height="15" viewBox="0 0 17 15"><rect x="0.5" y="0.5" width="14.5" height="11.5" rx="1" fill="#eef0f2" stroke="#b4bac2" stroke-width=".8"/><rect x="2" y="1.8" width="6.5" height="1" fill="#7aa8d8"/><rect x="2.2" y="3.8" width="4.4" height="6.6" fill="#a8d49a"/><rect x="8" y="4" width="5.4" height="2" fill="#dde2e8"/><circle cx="12.2" cy="10.2" r="4.3" fill="#2f8fb8" stroke="#256fa8" stroke-width=".6"/><path d="M10 8.6 Q11.6 7 13 8.4 Q13.8 9.8 12.4 10.6 Q11.4 12.6 10.4 11 Z" fill="#5cc05a"/></svg>
<span class="t" style="left:33px;top:66.0px;font-size:7.4px;color:#000;">IFrame1</span>
<div class="panel" style="left:225px;top:13px;width:104.5px;height:103.5px;"></div>
<svg style="left:231.3px;top:60px" width="16.4" height="10.5" viewBox="0 0 16.4 10.5"><path d="M0.3 10.2 V8.2 A7.9 7.9 0 0 1 16.1 8.2 V10.2 Z" fill="#3e3e42"/><g fill="#d8d8d8"><circle cx="2.4" cy="7.8" r=".5"/><circle cx="3.4" cy="4.8" r=".5"/><circle cx="5.8" cy="2.8" r=".5"/><circle cx="8.6" cy="2.2" r=".5"/><circle cx="11.4" cy="3" r=".5"/><circle cx="13.4" cy="5" r=".5"/><circle cx="14.2" cy="7.8" r=".5"/></g><path d="M9.6 8.8 L4.6 3.6" stroke="#e23a30" stroke-width="1.2" stroke-linecap="round"/></svg>
<span class="t" style="left:252.5px;top:61.59999999999999px;font-size:7.4px;color:#000;">Gauge1</span>
<div class="" style="left:110px;top:50px;width:103px;height:24px;background:#fff;border:none"></div>
<span class="t" style="left:111.69999999999999px;top:53.4px;font-size:7.4px;color:#000;font-weight:bold;font-size:7.4px;color:#000">Label1</span>
<div class="" style="left:122px;top:79px;width:104px;height:20.5px;background:#337ab7;border:none"></div>
<div style="left:124.5px;top:81px;width:7px;height:2.5px;background:#e8f0f8;border-radius:.5px"></div>
<span class="t" style="left:134.5px;top:86.1px;font-size:7.4px;color:#000;color:#fff">Progressbar1</span>
<div class="panel" style="left:72px;top:111px;width:104.5px;height:103.5px;"></div>
<svg style="left:78px;top:155px" width="17" height="15.5" viewBox="0 0 17 15.5"><ellipse cx="8.3" cy="9.5" rx="8" ry="5.2" fill="#3274ae"/><rect x="0.3000000000000007" y="6.3" width="16" height="3.2" fill="#3274ae"/><ellipse cx="8.3" cy="6.3" rx="8" ry="5.2" fill="#5aa2dc"/><path d="M8.3 6.3 L2.64 2.62 A8 5.2 0 0 1 16.03 4.95 Z" fill="#e3402f"/><path d="M8.3 6.3 L0.30 6.30 A8 5.2 0 0 1 2.64 2.62 Z" fill="#f2a43a"/><ellipse cx="8.3" cy="9.7" rx="5.6" ry="2.6" fill="none" stroke="#8cc0e8" stroke-width=".5" opacity=".7"/></svg>
<span class="t" style="left:100px;top:160.1px;font-size:7.4px;color:#000;">Chart1</span>
<div class="" style="left:209px;top:126px;width:104.5px;height:103.5px;background:linear-gradient(to bottom,#636363 0%,#4b4b4b 35%,#272727 70%,#040404 100%);border:1px solid #505050;border-bottom-color:#222"></div>
<svg style="left:214.8px;top:169.3px;" width="17.5" height="17" viewBox="0 0 10 10"><path d="M1.8 9.4 Q5 6.4 8.2 9.4 Z" fill="#a0a4a8"/><circle cx="5" cy="4.2" r="3.7" fill="#e0e2e4" stroke="#9a9ea2" stroke-width=".4"/><circle cx="5" cy="4.2" r="2.2" fill="#58a8d8"/><circle cx="5" cy="4.2" r="1" fill="#d0e8f6"/></svg>
<span class="t" style="left:236.5px;top:175.1px;font-size:7.4px;color:#000;color:#fff">WebCam1</span>
<div class="" style="left:122px;top:20.5px;width:77px;height:25px;background:linear-gradient(to bottom,#ecd8ff 0%,#d8aaff 40%,#a64af0 100%);border:1px solid #b88ae8"></div>
<svg style="left:127.5px;top:24px" width="17" height="17" viewBox="0 0 17 17"><rect x="1" y="4" width="14" height="10" rx="1.5" fill="#c8ccd0" stroke="#808890" stroke-width=".8"/><circle cx="10" cy="9.5" r="3.6" fill="#b8dcf4" stroke="#7090b0" stroke-width=".8"/><path d="M12.5 12.5 L15.5 15.5" stroke="#d07030" stroke-width="1.6"/><path d="M4 3.5 Q6 1 8 2" stroke="#666" stroke-width=".7" fill="none"/></svg>
<span class="t" style="left:149px;top:30.1px;font-size:7.4px;color:#000;color:#111">Hotkeys1</span>
<div class="hnd" style="left:119.5px;top:18.0px"></div>
<div class="hnd" style="left:158.0px;top:18.0px"></div>
<div class="hnd" style="left:196.5px;top:18.0px"></div>
<div class="hnd" style="left:119.5px;top:30.299999999999997px"></div>
<div class="hnd" style="left:196.5px;top:30.299999999999997px"></div>
<div class="hnd" style="left:119.5px;top:42.5px"></div>
<div class="hnd" style="left:158.0px;top:42.5px"></div>
<div class="hnd" style="left:196.5px;top:42.5px"></div>
<div class="" style="left:38px;top:229px;width:78.5px;height:24.5px;background:linear-gradient(to bottom,#eef3ff 0%,#c4d6fb 50%,#9dbcf7 100%);border:1px solid #b2b8c6"></div>
<svg style="left:44px;top:233.5px;" width="15" height="15" viewBox="0 0 10 10"><rect x="0.4" y="0.4" width="9.2" height="9.2" rx="1" fill="#2e8b36"/><path d="M6.8 2.6 L3.2 5 L6.8 7.4" stroke="#fff" stroke-width=".7" fill="none"/><circle cx="6.8" cy="2.6" r="1.1" fill="#fff"/><circle cx="3.2" cy="5" r="1.1" fill="#fff"/><circle cx="6.8" cy="7.4" r="1.1" fill="#fff"/></svg>
<span class="t" style="left:65.5px;top:238.4px;font-size:7.4px;color:#000;">Share1</span>
</div>
<div class="sb" style="left:455px;top:71px;width:8px;height:301.5px;"></div>
<div class="thumb" style="left:455.2px;top:81px;width:6.8px;height:53px;"></div>
<svg style="left:457.2px;top:74.64999999999999px" width="3.2" height="2.3" viewBox="0 0 4 3"><path d="M0 3 L2 0 L4 3 Z" fill="#444"/></svg>
<svg style="left:457.2px;top:367.35px" width="3.2" height="2.3" viewBox="0 0 4 3"><path d="M0 0 L2 3 L4 0 Z" fill="#444"/></svg>
<div class="sb" style="left:110.5px;top:372.5px;width:352.5px;height:9.5px;"></div>
<div class="thumbh" style="left:121px;top:374px;width:70.5px;height:6.8px;"></div>
<svg style="left:114.64999999999999px;top:376.09999999999997px" width="2.3" height="3.2" viewBox="0 0 3 4"><path d="M3 0 L0 2 L3 4 Z" fill="#444"/></svg>
<svg style="left:448.35px;top:376.09999999999997px" width="2.3" height="3.2" viewBox="0 0 3 4"><path d="M0 0 L3 2 L0 4 Z" fill="#444"/></svg>
<svg style="left:457px;top:105.5px" width="3" height="4" viewBox="0 0 3 4"><path d="M0 .5 H3 M0 2 H3 M0 3.5 H3" stroke="#888" stroke-width=".5"/></svg>
<svg style="left:153.7px;top:376px" width="4" height="3" viewBox="0 0 4 3"><path d="M.5 0 V3 M2 0 V3 M3.5 0 V3" stroke="#888" stroke-width=".5"/></svg>
<div class="hdr" style="left:467px;top:30.1px;width:96.2px;height:10.5px;"></div>
<svg style="left:469.3px;top:31.25px;" width="8.3" height="8.3" viewBox="0 0 10 10"><rect x="2.4" y="0.8" width="7" height="5.4" rx=".6" fill="#cfe2f6" stroke="#3f86c8" stroke-width=".7"/><rect x="0.6" y="3" width="7.4" height="6" rx=".6" fill="#fdfdfd" stroke="#3f86c8" stroke-width=".8"/><rect x="0.6" y="3" width="7.4" height="1.6" fill="#5a9fe0"/></svg>
<span class="t" style="left:479.2px;top:31.6px;font-size:6.3px;color:#111">Views</span>
<div class="dots" style="left:494.9px;top:33.1px;width:50.60000000000002px"></div>
<svg style="left:547.3px;top:32.1px" width="5" height="7" viewBox="1 0 5 7"><path d="M2.5 0.5 H4.5 V3.7 H5.3 V4.4 H3.8 V6.6 H3.2 V4.4 H1.7 V3.7 H2.5 Z" fill="#2a2a2a"/><rect x="3" y="1" width=".8" height="2.6" fill="#bbb"/></svg>
<svg style="left:555.3px;top:32.9px" width="4.8" height="4.6" viewBox="0 0 5 5"><path d="M0.4 0.4 L4.6 4.6 M4.6 0.4 L0.4 4.6" stroke="#111" stroke-width="1.05" fill="none"/></svg>
<div class="" style="left:468.7px;top:44px;width:1px;height:10px;background:#d0d0d0"></div>
<svg style="left:471.7px;top:44.5px;" width="9" height="9" viewBox="0 0 10 10"><rect x="0.6" y="1" width="8.4" height="7" rx=".8" fill="#fdfdfd" stroke="#3f86c8" stroke-width=".9"/><rect x="0.6" y="1" width="8.4" height="1.8" fill="#5a9fe0"/><circle cx="7.7" cy="7.6" r="2.1" fill="#58b030" stroke="#fff" stroke-width=".4"/></svg>
<div class="" style="left:483.4px;top:44px;width:1px;height:10px;background:#d0d0d0"></div>
<svg style="left:487px;top:44.5px;" width="9" height="9" viewBox="0 0 10 10"><rect x="0.6" y="1" width="8.4" height="7" rx=".8" fill="#fdfdfd" stroke="#70757c" stroke-width=".9"/><rect x="0.6" y="1" width="8.4" height="1.8" fill="#8a9098"/><circle cx="7.7" cy="7.6" r="2.1" fill="#4a4e54" stroke="#fff" stroke-width=".4"/></svg>
<div class="" style="left:499px;top:44px;width:1px;height:10px;background:#d0d0d0"></div>
<svg style="left:502px;top:44.5px;" width="9" height="9" viewBox="0 0 10 10"><path d="M5 0.8 L7.8 4.4 H6 V9.4 H4 V4.4 H2.2 Z" fill="#5c5c5c"/></svg>
<svg style="left:514px;top:44.5px;" width="9" height="9" viewBox="0 0 10 10"><path d="M5 9.4 L7.8 5.8 H6 V0.8 H4 V5.8 H2.2 Z" fill="#5c5c5c"/></svg>
<div class="" style="left:466.6px;top:56px;width:97px;height:40.8px;background:#fff;border:1px solid #a6a6a6"></div>
<span class="t" style="left:469.6px;top:57.4px;font-size:6.2px">Master</span>
<div class="" style="left:467.8px;top:66.4px;width:94.6px;height:9px;background:#3399ff"></div>
<span class="t" style="left:469.6px;top:67px;font-size:6.2px;color:#d4eaff">View1</span>
<div class="hdr" style="left:566px;top:30.1px;width:89.8px;height:10.5px;"></div>
<svg style="left:568.3px;top:31.25px;" width="8.3" height="8.3" viewBox="0 0 10 10"><ellipse cx="5" cy="6.4" rx="4.4" ry="2.8" fill="#6aa8e0" stroke="#3a78b8" stroke-width=".4"/><ellipse cx="5" cy="4.2" rx="4.2" ry="2.8" fill="#f0b040" stroke="#c88820" stroke-width=".4"/><circle cx="6.6" cy="2.6" r="1.6" fill="#e8e8e8" stroke="#999" stroke-width=".3"/></svg>
<span class="t" style="left:578.3px;top:31.6px;font-size:6.3px;color:#111">Controls</span>
<div class="dots" style="left:601.0px;top:33.1px;width:37.200000000000045px"></div>
<svg style="left:640.0px;top:32.1px" width="5" height="7" viewBox="1 0 5 7"><path d="M2.5 0.5 H4.5 V3.7 H5.3 V4.4 H3.8 V6.6 H3.2 V4.4 H1.7 V3.7 H2.5 Z" fill="#2a2a2a"/><rect x="3" y="1" width=".8" height="2.6" fill="#bbb"/></svg>
<svg style="left:648px;top:32.9px" width="4.8" height="4.6" viewBox="0 0 5 5"><path d="M0.4 0.4 L4.6 4.6 M4.6 0.4 L0.4 4.6" stroke="#111" stroke-width="1.05" fill="none"/></svg>
<div class="" style="left:566px;top:42.7px;width:89.6px;height:10.6px;background:#fff;border:1px solid #e4e4e4;border-radius:1.5px"></div>
<span class="t" style="left:567.5px;top:44.0px;color:#6e6e6e;font-size:6.4px">Search</span>
<div class="" style="left:565.7px;top:56px;width:90.2px;height:40.8px;background:#fff;border:1px solid #a6a6a6"></div>
<div style="left:566.5px;top:57px;width:80px;height:39px;overflow:hidden">
<div style="left:6.5px;top:0;width:0;height:40px;border-left:1px dotted #bbb"></div>
<div style="left:7.0px;top:3.8999999999999986px;width:4px;height:0;border-top:1px dotted #bbb"></div>
<svg style="left:11.5px;top:-0.10000000000000142px;" width="8" height="8" viewBox="0 0 10 10"><rect x="0.6" y="1" width="7.6" height="6.6" fill="#eef2f4" stroke="#9aa4ac" stroke-width=".6"/><circle cx="6.6" cy="6.8" r="2.6" fill="#38a070" stroke="#2a78b0" stroke-width=".6"/></svg>
<span class="t" style="left:22.299999999999955px;top:0.09999999999999876px;font-size:6px">IFrame1</span>
<div style="left:7.0px;top:12.5px;width:4px;height:0;border-top:1px dotted #bbb"></div>
<svg style="left:11.5px;top:8.5px;" width="8" height="8" viewBox="0 0 10 10"><path d="M1.8 9.4 Q5 6.4 8.2 9.4 Z" fill="#a0a4a8"/><circle cx="5" cy="4.2" r="3.7" fill="#e0e2e4" stroke="#9a9ea2" stroke-width=".4"/><circle cx="5" cy="4.2" r="2.2" fill="#58a8d8"/><circle cx="5" cy="4.2" r="1" fill="#d0e8f6"/></svg>
<span class="t" style="left:22.299999999999955px;top:8.7px;font-size:6px">WebCam1</span>
<div style="left:7.0px;top:20.799999999999997px;width:4px;height:0;border-top:1px dotted #bbb"></div>
<svg style="left:11.5px;top:16.799999999999997px;" width="8" height="8" viewBox="0 0 10 10"><path d="M0.4 8.6 A4.6 5.4 0 0 1 9.6 8.6 Z" fill="#3a3434"/><path d="M5 7.6 L7.2 4" stroke="#e05838" stroke-width=".8"/><path d="M1.8 7.4 A3.4 4 0 0 1 8.2 7.4" stroke="#aaa" stroke-width=".5" fill="none" stroke-dasharray=".7 .7"/></svg>
<span class="t" style="left:22.299999999999955px;top:16.999999999999996px;font-size:6px">Gauge1</span>
<div style="left:7.0px;top:28.900000000000006px;width:4px;height:0;border-top:1px dotted #bbb"></div>
<div style="left:10.899999999999977px;top:25px;width:36.2px;height:7.8px;background:#ececec;border:1px solid #d8d8d8;border-radius:1px"></div>
<svg style="left:11.5px;top:24.900000000000006px;" width="8" height="8" viewBox="0 0 10 10"><rect x="0.6" y="2" width="8" height="6" rx=".8" fill="#c8d0d8" stroke="#8a949e" stroke-width=".6"/><circle cx="5.6" cy="5.2" r="2.2" fill="#b8dcf4" stroke="#6a8aac" stroke-width=".6"/><path d="M7.2 7 L9.2 9" stroke="#c87838" stroke-width="1"/></svg>
<span class="t" style="left:22.299999999999955px;top:25.100000000000005px;font-size:6px">Hotkeys1</span>
<div style="left:7.0px;top:37.2px;width:4px;height:0;border-top:1px dotted #bbb"></div>
<svg style="left:11.5px;top:33.2px;" width="8" height="8" viewBox="0 0 10 10"><rect x="0.4" y="0.4" width="9.2" height="9.2" rx="1" fill="#2e8b36"/><path d="M6.8 2.6 L3.2 5 L6.8 7.4" stroke="#fff" stroke-width=".7" fill="none"/><circle cx="6.8" cy="2.6" r="1.1" fill="#fff"/><circle cx="3.2" cy="5" r="1.1" fill="#fff"/><circle cx="6.8" cy="7.4" r="1.1" fill="#fff"/></svg>
<span class="t" style="left:22.299999999999955px;top:33.400000000000006px;font-size:6px">Share1</span>
</div>
<div class="sb" style="left:646.6px;top:57px;width:8.4px;height:39px;"></div>
<svg style="left:649.1999999999999px;top:60.35px" width="3.2" height="2.3" viewBox="0 0 4 3"><path d="M0 3 L2 0 L4 3 Z" fill="#444"/></svg>
<svg style="left:649.1999999999999px;top:90.35px" width="3.2" height="2.3" viewBox="0 0 4 3"><path d="M0 0 L2 3 L4 0 Z" fill="#444"/></svg>
<div class="thumb" style="left:647px;top:75.6px;width:6.8px;height:8.2px;"></div>
<div class="hdr" style="left:467px;top:99.4px;width:188.8px;height:10.5px;"></div>
<svg style="left:469.3px;top:100.55px;" width="8.3" height="8.3" viewBox="0 0 10 10"><rect x="0.6" y="1.4" width="8.4" height="6.6" rx=".6" fill="#dce8f4" stroke="#4a7aa8" stroke-width=".8"/><rect x="0.6" y="1.4" width="8.4" height="1.6" fill="#4a7aa8"/><circle cx="6.8" cy="7.2" r="2.2" fill="#58b030"/></svg>
<span class="t" style="left:479.2px;top:100.9px;font-size:6.3px;color:#111">HtmlContent1 preview</span>
<div class="dots" style="left:536.2px;top:102.4px;width:102.0px"></div>
<svg style="left:640.0px;top:101.4px" width="5" height="7" viewBox="1 0 5 7"><path d="M2.5 0.5 H4.5 V3.7 H5.3 V4.4 H3.8 V6.6 H3.2 V4.4 H1.7 V3.7 H2.5 Z" fill="#2a2a2a"/><rect x="3" y="1" width=".8" height="2.6" fill="#bbb"/></svg>
<svg style="left:648px;top:102.2px" width="4.8" height="4.6" viewBox="0 0 5 5"><path d="M0.4 0.4 L4.6 4.6 M4.6 0.4 L0.4 4.6" stroke="#111" stroke-width="1.05" fill="none"/></svg>
<div class="" style="left:466.6px;top:109.9px;width:189.2px;height:68.2px;background:#fff;border:1px solid #d0d0d0;border-top:none"></div>
<span class="t" style="left:467px;top:110.9px;font-size:7.2px;color:#444;transform:none">HtmlContent1</span>
<div class="sb" style="left:646.6px;top:111px;width:8.4px;height:67px;"></div>
<svg style="left:649.1999999999999px;top:114.85px" width="3.2" height="2.3" viewBox="0 0 4 3"><path d="M0 3 L2 0 L4 3 Z" fill="#444"/></svg>
<svg style="left:649.1999999999999px;top:171.85px" width="3.2" height="2.3" viewBox="0 0 4 3"><path d="M0 0 L2 3 L4 0 Z" fill="#444"/></svg>
<div class="thumb" style="left:647px;top:119px;width:6.8px;height:33px;"></div>
<svg style="left:649px;top:133.5px" width="3" height="4" viewBox="0 0 3 4"><path d="M0 .5 H3 M0 2 H3 M0 3.5 H3" stroke="#888" stroke-width=".5"/></svg>
<div class="hdr" style="left:467px;top:181.1px;width:188.8px;height:10.5px;"></div>
<svg style="left:469.3px;top:182.25px;" width="8.3" height="8.3" viewBox="0 0 10 10"><path d="M1 3 L5 1 L9 3 L5 5 Z" fill="#a8d0f0" stroke="#4a88c0" stroke-width=".4"/><path d="M1 3 V7 L5 9.2 V5 Z" fill="#5a9ad8"/><path d="M9 3 V7 L5 9.2 V5 Z" fill="#88b8e8"/></svg>
<span class="t" style="left:479.2px;top:182.6px;font-size:6.3px;color:#111">Hotkeys1 properties</span>
<div class="dots" style="left:531.2px;top:184.1px;width:107.0px"></div>
<svg style="left:640.0px;top:183.1px" width="5" height="7" viewBox="1 0 5 7"><path d="M2.5 0.5 H4.5 V3.7 H5.3 V4.4 H3.8 V6.6 H3.2 V4.4 H1.7 V3.7 H2.5 Z" fill="#2a2a2a"/><rect x="3" y="1" width=".8" height="2.6" fill="#bbb"/></svg>
<svg style="left:648px;top:183.9px" width="4.8" height="4.6" viewBox="0 0 5 5"><path d="M0.4 0.4 L4.6 4.6 M4.6 0.4 L0.4 4.6" stroke="#111" stroke-width="1.05" fill="none"/></svg>
<div class="" style="left:466.6px;top:206.6px;width:188.6px;height:176.8px;background:#fff;border:1px solid #c4c4c4"></div>
<div class="" style="left:467.3px;top:193.4px;width:26.4px;height:14px;background:#fff;border:1px solid #c4c4c4;border-bottom:none;border-radius:1.5px 1.5px 0 0"></div>
<span class="t" style="left:470.5px;top:196.2px;font-size:6.2px">General</span>
<div class="" style="left:468.7px;top:208.7px;width:185.3px;height:93.57px;background:#fff;border:1px solid #d6d6d6"></div>
<div class="" style="left:469.2px;top:208.7px;width:184.3px;height:10.33px;background:#f0f0f0;border-bottom:1px solid #d0d0d0;border-top:1px solid #d6d6d6"></div>
<svg style="left:471.4px;top:211.5px" width="4.8" height="4.8" viewBox="0 0 5 5"><rect x="0.4" y="0.4" width="4.2" height="4.2" fill="#fff" stroke="#666" stroke-width=".6"/><path d="M1.3 2.5 H3.7" stroke="#222" stroke-width=".7"/></svg>
<span class="t" style="left:480.1px;top:210.0px;font-weight:bold;font-size:6.3px;color:#111;transform:scaleX(.96)">Behaviour</span>
<div class="" style="left:469.2px;top:219.03px;width:9.8px;height:10.33px;background:#f0f0f0"></div>
<div class="" style="left:479.0px;top:228.86px;width:174.3px;height:0.6px;background:#ebebeb"></div>
<span class="t" style="left:488.8px;top:220.33px;font-size:6px">Hotkeys</span>
<div class="" style="left:469.2px;top:229.35999999999999px;width:9.8px;height:10.33px;background:#f0f0f0"></div>
<div class="" style="left:479.0px;top:239.19px;width:174.3px;height:0.6px;background:#ebebeb"></div>
<span class="t" style="left:488.8px;top:230.66px;font-size:6px">Name</span>
<span class="t" style="left:552.6px;top:230.66px;font-size:6px;color:#1a1a7a">Hotkeys1</span>
<div class="" style="left:469.2px;top:239.69px;width:184.3px;height:10.33px;background:#f0f0f0;border-bottom:1px solid #d0d0d0;border-top:1px solid #d6d6d6"></div>
<svg style="left:471.4px;top:242.49px" width="4.8" height="4.8" viewBox="0 0 5 5"><rect x="0.4" y="0.4" width="4.2" height="4.2" fill="#fff" stroke="#666" stroke-width=".6"/><path d="M1.3 2.5 H3.7" stroke="#222" stroke-width=".7"/></svg>
<span class="t" style="left:480.1px;top:240.99px;font-weight:bold;font-size:6.3px;color:#111;transform:scaleX(.96)">Designtime</span>
<div class="" style="left:469.2px;top:250.01999999999998px;width:9.8px;height:10.33px;background:#f0f0f0"></div>
<div class="" style="left:479.0px;top:259.84999999999997px;width:174.3px;height:0.6px;background:#ebebeb"></div>
<span class="t" style="left:488.8px;top:251.32px;font-size:6px">Height</span>
<span class="t" style="left:552.6px;top:251.32px;font-size:6px;color:#1a1a7a">48</span>
<div class="" style="left:469.2px;top:260.34999999999997px;width:9.8px;height:10.33px;background:#f0f0f0"></div>
<div class="" style="left:479.0px;top:270.17999999999995px;width:174.3px;height:0.6px;background:#ebebeb"></div>
<span class="t" style="left:488.8px;top:261.65px;font-size:6px">Left</span>
<span class="t" style="left:552.6px;top:261.65px;font-size:6px;color:#1a1a7a">234</span>
<div class="" style="left:469.2px;top:270.68px;width:9.8px;height:10.33px;background:#f0f0f0"></div>
<div class="" style="left:479.0px;top:280.51px;width:174.3px;height:0.6px;background:#ebebeb"></div>
<span class="t" style="left:488.8px;top:271.98px;font-size:6px">Locked</span>
<span class="t" style="left:552.6px;top:271.98px;font-size:6px;color:#1a1a7a">False</span>
<div class="" style="left:469.2px;top:281.01px;width:9.8px;height:10.33px;background:#f0f0f0"></div>
<div class="" style="left:479.0px;top:290.84px;width:174.3px;height:0.6px;background:#ebebeb"></div>
<span class="t" style="left:488.8px;top:282.31px;font-size:6px">Top</span>
<span class="t" style="left:552.6px;top:282.31px;font-size:6px;color:#1a1a7a">40</span>
<div class="" style="left:469.2px;top:291.34px;width:9.8px;height:10.33px;background:#f0f0f0"></div>
<div class="" style="left:479.0px;top:301.16999999999996px;width:174.3px;height:0.6px;background:#ebebeb"></div>
<span class="t" style="left:488.8px;top:292.64px;font-size:6px">Width</span>
<span class="t" style="left:552.6px;top:292.64px;font-size:6px;color:#1a1a7a">150</span>
<div class="" style="left:551.6px;top:219.03px;width:0.7px;height:20.66px;background:#e8e8e8"></div>
<div class="" style="left:551.6px;top:250.01999999999998px;width:0.7px;height:51.65px;background:#e8e8e8"></div>
</div></body></html>
